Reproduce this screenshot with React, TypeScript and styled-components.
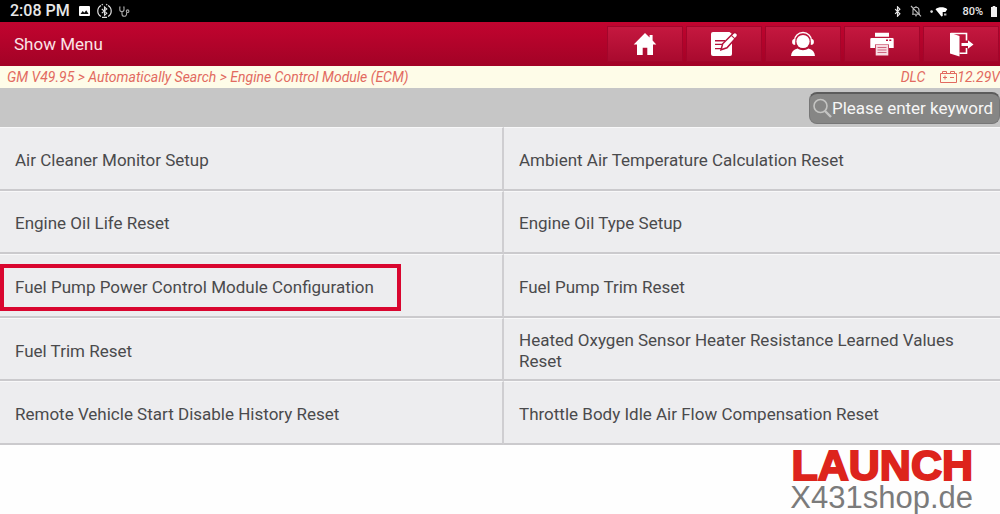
import React from "react";
import styled, { createGlobalStyle, css } from "styled-components";

const GlobalStyle = createGlobalStyle`
  * { box-sizing: border-box; }
  body { margin: 0; background: #fefefe; font-family: Roboto, "Liberation Sans", sans-serif; }
  button, input { font: inherit; }
`;

const Page = styled.div`
  display: flex;
  flex-direction: column;
  min-height: 100vh;
`;

const StatusBar = styled.div`
  display: flex;
  align-items: center;
  justify-content: space-between;
  height: 22px;
  padding: 0 3px 0 10px;
  background: #000;
  color: #e8e8e8;
`;

const StatusGroup = styled.div<{ $gap: number }>`
  display: flex;
  align-items: center;
  gap: ${(p) => p.$gap}px;
`;

const Clock = styled.span`
  margin-right: 2px;
  font-size: 16px;
  font-weight: 500;
  line-height: 20px;
`;

const Charge = styled.span`
  margin-left: 6px;
  font-size: 11px;
  font-weight: 500;
`;

const Header = styled.header`
  display: flex;
  align-items: center;
  justify-content: space-between;
  height: 44px;
  padding: 0 1px 0 14px;
  background: linear-gradient(#c2042f, #a20226);
`;

const Title = styled.h1`
  margin: 0;
  font-size: 17px;
  font-weight: 400;
  color: #fbe3e6;
`;

const Toolbar = styled.nav`
  display: flex;
  gap: 3px;
`;

const ToolButton = styled.button`
  display: flex;
  align-items: center;
  justify-content: center;
  width: 76px;
  height: 36px;
  padding: 0;
  border: 1px solid #a2062b;
  background: linear-gradient(#c5183f, #a90a2e);
  color: #fff;
`;

const Trail = styled.div`
  display: flex;
  align-items: center;
  justify-content: space-between;
  height: 22px;
  padding-left: 7px;
  background: #fefce8;
  color: #e26a60;
  font-size: 14px;
  font-style: italic;
  white-space: nowrap;
`;

const Readings = styled.div`
  display: flex;
  align-items: center;
  gap: 15px;
`;

const Voltage = styled.span`
  display: flex;
  align-items: center;
`;

const SearchStrip = styled.div`
  display: flex;
  align-items: center;
  justify-content: flex-end;
  height: 39px;
  background: #c6c6c6;
`;

const SearchBox = styled.label`
  display: flex;
  align-items: center;
  width: 191px;
  height: 32px;
  padding-left: 3px;
  border: 1px solid #777;
  border-top: 2px solid #5c5c5c;
  border-radius: 8px;
  background: #868685;
  color: #c4c4c2;
`;

const SearchInput = styled.input`
  flex: 1;
  min-width: 0;
  padding: 0;
  border: 0;
  outline: 0;
  background: transparent;
  color: #fff;
  font-size: 17px;
  &::placeholder { color: #f6f6f6; opacity: 1; }
`;

const Menu = styled.main`
  display: grid;
  grid-template-columns: minmax(0, 504fr) minmax(0, 496fr);
  grid-auto-rows: 1fr;
  min-height: 318px;
`;

const MenuItem = styled.button`
  display: flex;
  align-items: center;
  padding: 4px 15px 0;
  border: 0;
  border-bottom: 2px solid #cbcacd;
  border-top: 1px solid #f8f8f9;
  background: #ededef;
  color: #4a4a4c;
  font-size: 17px;
  line-height: 21px;
  text-align: left;
  &:nth-child(odd) { border-right: 2px solid #cfced1; }
`;

const ItemLabel = styled.span<{ $marked?: boolean }>`
  ${(p) =>
    p.$marked &&
    css`
      margin-left: -15px;
      padding: 9px 23px 9px 11px;
      border: 4px solid #d9062f;
    `}
`;

const Footer = styled.footer`
  display: flex;
  flex-direction: column;
  align-items: flex-end;
  padding: 0 27px 3px 0;
  font-family: "Liberation Sans", Arial, sans-serif;
`;

const Brand = styled.strong`
  color: #dd241c;
  font-size: 43px;
  line-height: 40px;
  -webkit-text-stroke: 2px #dd241c;
`;

const Shop = styled.span`
  color: #7b7b7b;
  font-size: 31px;
  line-height: 26px;
`;

const PictureIcon = () => (
  <svg width="11" height="10" viewBox="0 0 11 10" aria-hidden="true">
    <rect width="11" height="10" rx="1" fill="#fff" />
    <path d="M1.5 8 3.7 5 5.3 6.7 7.2 4.3 9.6 8Z" fill="#111" />
  </svg>
);

const LinkedIcon = () => (
  <svg width="15" height="16" viewBox="0 0 15 16" fill="none" stroke="#ddd" aria-hidden="true">
    <path d="M4 2.5a6.3 6.3 0 0 0 0 11M11 2.5a6.3 6.3 0 0 1 0 11M5 14.4h5M4.8 1.2l1 1M10.2 1.2l-1 1" strokeWidth="1.2" />
    <path d="m4.8 6 5 4.2-2.3 2V4l2.3 2-5 4.2" strokeWidth="1.1" />
  </svg>
);

const ScopeIcon = () => (
  <svg width="11" height="11" viewBox="0 0 11 11" fill="none" stroke="#aaa" strokeWidth="1.1" aria-hidden="true">
    <path d="M1.5 1H.8v2.5a2.1 2.1 0 0 0 4.2 0V1h-.8M3 5.6V8a2.3 2.3 0 0 0 4.6 0V6.4" />
    <circle cx="8.6" cy="5.2" r="1.3" />
  </svg>
);

const BluetoothIcon = () => (
  <svg width="9" height="11" viewBox="1 0 10 14" fill="none" stroke="currentColor" strokeWidth="1.5" aria-hidden="true">
    <path d="m3 4 6 6-3 3V1l3 3-6 6" />
  </svg>
);

const BellOffIcon = () => (
  <svg width="12" height="12" viewBox="0 0 12 12" fill="none" stroke="#bbb" strokeWidth="1.1" aria-hidden="true">
    <path d="M3 9V5.3a3 3 0 0 1 6 0V9M2 9.3h8M6 1v1.4M5 10.8h2M1 1l10 10.4" />
  </svg>
);

const WifiIcon = () => (
  <svg width="18" height="11" viewBox="0 0 18 11" aria-hidden="true">
    <circle cx="1.6" cy="5.6" r="1.3" fill="#ddd" />
    <path d="M5.5 3.2C8.6.6 14.2.6 17.3 3.2L15.4 6h-2.7v4L11.4 10.6Z" fill="#fff" />
    <path d="M14 7.5h2.4v2H14Z" fill="#bbb" />
  </svg>
);

const BatteryIcon = () => (
  <svg width="6" height="11" viewBox="0 0 6 11" aria-hidden="true">
    <path d="M1.7 0h2.6v1H6v10H0V1h1.7Z" fill="#eee" />
  </svg>
);

const HomeIcon = () => (
  <svg width="24" height="24" viewBox="0 0 24 24" fill="currentColor" aria-hidden="true">
    <path d="m12 1 4.6 4.6V3h3v5.6l3.7 3.9H20V23h-5.7v-7.2H9.7V23H4V12.5H.7Z" />
  </svg>
);

const EditIcon = () => (
  <svg width="28" height="26" viewBox="0 0 28 26" aria-hidden="true">
    <path d="M3 1h16.5L22 3v20a2 2 0 0 1-2 2H3a2 2 0 0 1-2-2V3a2 2 0 0 1 2-2Z" fill="currentColor" />
    <path d="M5 9.8h10M5 13.4h8M5 17.6h8" stroke="#b5103a" strokeWidth="1.4" />
    <path d="m11 18.8 1.7-6L23 2.5a2.4 2.4 0 0 1 3.9 3.3L17 16.8Z" fill="currentColor" stroke="#b5103a" strokeWidth="1.5" />
    <path d="m21.3 4.4 3.7 3.4" stroke="#b5103a" strokeWidth="1.1" />
  </svg>
);

const SupportIcon = () => (
  <svg width="26" height="26" viewBox="0 0 26 26" aria-hidden="true">
    <circle cx="13" cy="10.5" r="6.6" fill="currentColor" />
    <path d="M4.4 11V9.8a8.6 8.3 0 0 1 17.2 0V11" fill="none" stroke="currentColor" strokeWidth="1.4" />
    <path d="M3.2 8.2c-1.5 1-1.5 4.4 0 5.4l2 .4V8ZM22.8 8.2c1.5 1 1.5 4.4 0 5.4l-2 .4V8Z" fill="currentColor" />
    <path d="M1 25c.3-4 2.6-6.4 6.6-7.4 3.2 2.2 7.6 2.2 10.8 0C22.4 18.6 24.7 21 25 25Z" fill="currentColor" />
  </svg>
);

const PrinterIcon = () => (
  <svg width="24" height="24" viewBox="0 0 24 24" aria-hidden="true">
    <path d="M5 .7h14v4H5ZM1.5 6h21a1.2 1.2 0 0 1 1.2 1.2V16H19v-3.5H5V16H.3V7.2A1.2 1.2 0 0 1 1.5 6Z" fill="currentColor" />
    <path d="M5.7 13h12.6v10.5H5.7Z" fill="#f7dce2" />
    <path d="M7.5 15.5h9M7.5 18h9M7.5 20.5h9" stroke="#cf6680" />
    <path d="M16 8.2h2M19.3 8.2h2" stroke="#b5103a" strokeWidth="1.5" />
  </svg>
);

const ExitIcon = () => (
  <svg width="25" height="25" viewBox="0 0 25 25" aria-hidden="true">
    <path d="M1 .8 10.5 4v20.5l-9.5-3Z" fill="currentColor" />
    <path d="M2 1.5h15.5v7M17.5 16v5.3h-7" fill="none" stroke="currentColor" strokeWidth="1.6" />
    <path d="M12.5 11H19V8.2l5.5 4.3-5.5 4.3V14h-6.5Z" fill="currentColor" />
  </svg>
);

const CarBatteryIcon = () => (
  <svg width="17" height="12" viewBox="0 0 17 12" fill="none" stroke="currentColor" aria-hidden="true">
    <path d="M.5 2.5h16v9H.5ZM2.5 2.5v-2h4v2M10.5 2.5v-2h4v2M3 6.5h4M5 4.5v4M10 6.5h4" />
  </svg>
);

const SearchIcon = () => (
  <svg width="19" height="20" viewBox="0 0 19 20" fill="none" stroke="currentColor" aria-hidden="true">
    <circle cx="7.5" cy="8" r="6.5" strokeWidth="1.6" />
    <path d="m12 13 6 6" strokeWidth="2.4" />
  </svg>
);

const tools = [
  { label: "Home", icon: <HomeIcon /> },
  { label: "Edit", icon: <EditIcon /> },
  { label: "Support", icon: <SupportIcon /> },
  { label: "Print", icon: <PrinterIcon /> },
  { label: "Exit", icon: <ExitIcon /> },
];

const items = [
  "Air Cleaner Monitor Setup",
  "Ambient Air Temperature Calculation Reset",
  "Engine Oil Life Reset",
  "Engine Oil Type Setup",
  "Fuel Pump Power Control Module Configuration",
  "Fuel Pump Trim Reset",
  "Fuel Trim Reset",
  "Heated Oxygen Sensor Heater Resistance Learned Values Reset",
  "Remote Vehicle Start Disable History Reset",
  "Throttle Body Idle Air Flow Compensation Reset",
];
const markedItem = items[4];

export default function App() {
  return (
    <Page>
      <GlobalStyle />
      <StatusBar>
        <StatusGroup $gap={7}>
          <Clock>2:08 PM</Clock>
          <PictureIcon />
          <LinkedIcon />
          <ScopeIcon />
        </StatusGroup>
        <StatusGroup $gap={8}>
          <BluetoothIcon />
          <BellOffIcon />
          <WifiIcon />
          <Charge>80%</Charge>
          <BatteryIcon />
        </StatusGroup>
      </StatusBar>
      <Header>
        <Title>Show Menu</Title>
        <Toolbar>
          {tools.map((t) => (
            <ToolButton key={t.label} type="button" aria-label={t.label}>{t.icon}</ToolButton>
          ))}
        </Toolbar>
      </Header>
      <Trail>
        <span>GM V49.95 &gt; Automatically Search &gt; Engine Control Module (ECM)</span>
        <Readings>
          <span>DLC</span>
          <Voltage><CarBatteryIcon />12.29V</Voltage>
        </Readings>
      </Trail>
      <SearchStrip>
        <SearchBox>
          <SearchIcon />
          <SearchInput type="text" aria-label="Search" placeholder="Please enter keyword" />
        </SearchBox>
      </SearchStrip>
      <Menu>
        {items.map((item) => (
          <MenuItem key={item} type="button">
            <ItemLabel $marked={item === markedItem}>{item}</ItemLabel>
          </MenuItem>
        ))}
      </Menu>
      <Footer>
        <Brand>LAUNCH</Brand>
        <Shop>X431shop.de</Shop>
      </Footer>
    </Page>
  );
}
